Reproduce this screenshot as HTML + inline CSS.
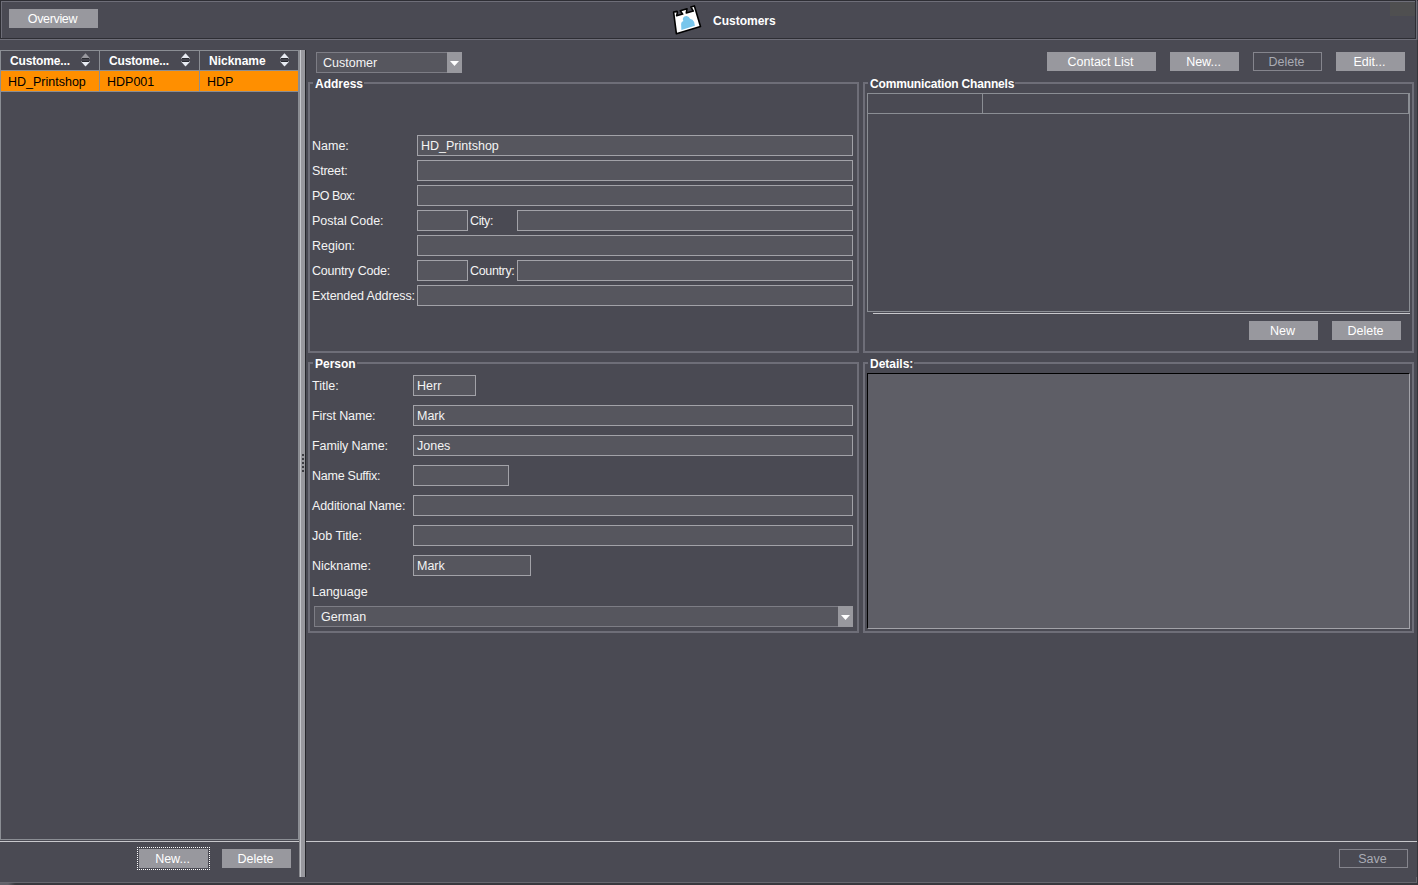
<!DOCTYPE html>
<html><head><meta charset="utf-8">
<style>
html,body{margin:0;padding:0;}
body{width:1418px;height:885px;overflow:hidden;background:#4a4a53;position:relative;font-family:"Liberation Sans",sans-serif;font-size:12.5px;line-height:15px;color:#f4f4f4;}
.a{position:absolute;box-sizing:border-box;}
.t{position:absolute;white-space:nowrap;line-height:15px;}
.b{font-weight:bold;font-size:12px;color:#fff;}
.btn{position:absolute;box-sizing:border-box;background:#98989e;color:#fff;text-align:center;line-height:15px;padding-top:3px;padding-right:2px;height:19px;width:69px;}
.dis{background:transparent;border:1px solid #85858d;color:#a9abb3;padding-top:2px;}
.fld{position:absolute;box-sizing:border-box;border:1px solid #a2a2a8;background:#56565e;height:21px;}
.grp{position:absolute;box-sizing:border-box;border:2px solid #6e6e78;}
.gl{position:absolute;background:#4a4a53;padding:0 1px 0 2px;line-height:15px;font-weight:bold;font-size:12px;color:#fff;white-space:nowrap;}
.hl{position:absolute;height:1px;}
.vl{position:absolute;width:1px;}
</style></head><body>

<!-- ===== top bar ===== -->
<div class="hl" style="left:0;top:0;width:1418px;background:#2e2e34"></div>
<div class="vl" style="left:0;top:0;height:40px;background:#2e2e34"></div>
<div class="hl" style="left:1px;top:1px;width:1414px;background:#6e6e78"></div>
<div class="vl" style="left:1px;top:1px;height:37px;background:#6e6e78"></div>
<div class="hl" style="left:1px;top:38px;width:1415px;background:#2e2e34"></div>
<div class="vl" style="left:1415px;top:1px;height:38px;background:#2e2e34"></div>
<div class="hl" style="left:0;top:39px;width:1417px;background:#6e6e78"></div>
<div class="vl" style="left:1416px;top:0;height:40px;background:#6e6e78"></div>
<div class="a" style="left:1390px;top:2px;width:25px;height:14px;background:#4f4f50"></div>

<div class="btn" style="left:9px;top:9px;width:89px;letter-spacing:-0.35px">Overview</div>

<!-- icon -->
<svg class="a" style="left:666px;top:0px" width="40" height="40" viewBox="666 0 40 40">
  <path d="M673.6 12.1 L677.1 11.4 Q677.6 12.2 677.2 13.4 L676.6 15.8 L682.7 14.1 L680.3 10.7 L687 8.7 L686.3 12.9 L693.3 11.1 L690.9 6.9 L694.4 5.9 L700.5 26.5 L676.4 33.8 Z" fill="#fff" stroke="#000" stroke-width="1.6" stroke-linejoin="round"/>
  <path d="M681.4 29.9 L681.1 24 Q681.2 21.6 683.4 21 Q682.4 19.4 683 17.9 Q684.2 15.9 686.7 16.1 Q689.3 16.5 690 18.8 Q692.9 19.2 694.1 22 L694.9 25.8 Z" fill="#78c6ec"/>
</svg>
<div class="t b" style="left:713px;top:14px">Customers</div>

<!-- ===== left table ===== -->
<div class="a" style="left:0;top:50px;width:299px;height:790px;border:1px solid #8b8e94;"></div>
<div class="hl" style="left:1px;top:70px;width:297px;background:#8b8e94"></div>
<div class="a" style="left:1px;top:71px;width:297px;height:20px;background:#ff8f00"></div>
<div class="hl" style="left:1px;top:91px;width:297px;background:#8b8e94"></div>
<div class="vl" style="left:99px;top:51px;height:40px;background:#8b8e94"></div>
<div class="vl" style="left:199px;top:51px;height:40px;background:#8b8e94"></div>

<div class="t b" style="left:10px;top:54px;letter-spacing:-0.15px">Custome...</div>
<div class="t b" style="left:109px;top:54px;letter-spacing:-0.15px">Custome...</div>
<div class="t b" style="left:209px;top:54px">Nickname</div>

<svg class="a" style="left:81px;top:53px" width="10" height="14" viewBox="0 0 10 14"><path d="M-0.2 5.6 L4.5 0.2 L9.2 5.6 Z" fill="#98989e"/><path d="M-0.2 8.4 L9.2 8.4 L4.5 13.6 Z" fill="#e8ebf2"/><rect x="1" y="5" width="7" height="1.1" fill="#2a2b31"/><rect x="1" y="7.9" width="7" height="1.1" fill="#2a2b31"/></svg>
<svg class="a" style="left:181px;top:53px" width="10" height="14" viewBox="0 0 10 14"><path d="M-0.2 5.6 L4.5 0.2 L9.2 5.6 Z" fill="#e8ebf2"/><path d="M-0.2 8.4 L9.2 8.4 L4.5 13.6 Z" fill="#e8ebf2"/><rect x="1" y="5" width="7" height="1.1" fill="#2a2b31"/><rect x="1" y="7.9" width="7" height="1.1" fill="#2a2b31"/></svg>
<svg class="a" style="left:280px;top:53px" width="10" height="14" viewBox="0 0 10 14"><path d="M-0.2 5.6 L4.5 0.2 L9.2 5.6 Z" fill="#e8ebf2"/><path d="M-0.2 8.4 L9.2 8.4 L4.5 13.6 Z" fill="#e8ebf2"/><rect x="1" y="5" width="7" height="1.1" fill="#2a2b31"/><rect x="1" y="7.9" width="7" height="1.1" fill="#2a2b31"/></svg>

<div class="t" style="left:8px;top:75px;color:#000">HD_Printshop</div>
<div class="t" style="left:107px;top:75px;color:#000">HDP001</div>
<div class="t" style="left:207px;top:75px;color:#000">HDP</div>

<!-- splitter -->
<div class="vl" style="left:299px;top:50px;height:827px;background:#8a8b90"></div>
<div class="vl" style="left:300px;top:50px;height:827px;background:#c6c7cc"></div>
<div class="a" style="left:301px;top:50px;width:4px;height:827px;background:#98989e"></div>
<div class="vl" style="left:305px;top:50px;height:827px;background:#25262b"></div>


<!-- grip -->
<div class="a" style="left:302px;top:454px;width:2px;height:2px;background:#3c3c42"></div><div class="a" style="left:302px;top:458px;width:2px;height:2px;background:#3c3c42"></div><div class="a" style="left:302px;top:462px;width:2px;height:2px;background:#3c3c42"></div><div class="a" style="left:302px;top:466px;width:2px;height:2px;background:#3c3c42"></div><div class="a" style="left:302px;top:470px;width:2px;height:2px;background:#3c3c42"></div>
<!-- bottom of left -->
<div class="hl" style="left:0;top:841px;width:299px;background:#c8c8cc"></div>
<div class="hl" style="left:306px;top:841px;width:1111px;background:#c8c8cc"></div>
<div class="a" style="left:137px;top:847px;width:73px;height:23px;border:1px dotted #fff;"></div>
<div class="btn" style="left:139px;top:849px;">New...</div>
<div class="btn" style="left:222px;top:849px;">Delete</div>

<div class="btn dis" style="left:1339px;top:849px;">Save</div>

<div class="hl" style="left:0;top:882px;width:1417px;background:#67676f"></div>
<div class="a" style="left:0;top:883px;width:1418px;height:2px;background:#38383e"></div>
<div class="vl" style="left:1417px;top:40px;height:845px;background:#35353a"></div>
<div class="vl" style="left:1416px;top:877px;height:6px;background:#67676f"></div>
<div class="a" style="left:0;top:883px;width:16px;height:2px;background:linear-gradient(to right,#606068 0,#606068 8px,#3a3a3f 15px)"></div>

<!-- ===== right top controls ===== -->
<div class="a" style="left:316px;top:52px;width:146px;height:21px;border:1px solid #7d7d85;background:#56565e"></div>
<div class="a" style="left:447px;top:52px;width:15px;height:21px;background:#98989e"></div>
<svg class="a" style="left:450px;top:61px" width="9" height="6" viewBox="0 0 9 6"><path d="M0 0 H9 L4.5 5 Z" fill="#fff"/></svg>
<div class="t" style="left:323px;top:56px">Customer</div>

<div class="btn" style="left:1047px;top:52px;width:109px;">Contact List</div>
<div class="btn" style="left:1170px;top:52px;">New...</div>
<div class="btn dis" style="left:1253px;top:52px;">Delete</div>
<div class="btn" style="left:1336px;top:52px;">Edit...</div>

<!-- ===== Address group ===== -->
<div class="grp" style="left:308px;top:82px;width:551px;height:271px"></div>
<div class="gl" style="left:313px;top:77px">Address</div>

<div class="t" style="left:312px;top:139px">Name:</div>
<div class="fld" style="left:417px;top:135px;width:436px"></div>
<div class="t" style="left:421px;top:139px">HD_Printshop</div>

<div class="t" style="left:312px;top:164px;letter-spacing:-0.2px">Street:</div>
<div class="fld" style="left:417px;top:160px;width:436px"></div>

<div class="t" style="left:312px;top:189px;letter-spacing:-0.55px">PO Box:</div>
<div class="fld" style="left:417px;top:185px;width:436px"></div>

<div class="t" style="left:312px;top:214px">Postal Code:</div>
<div class="fld" style="left:417px;top:210px;width:51px"></div>
<div class="t" style="left:470px;top:214px;letter-spacing:-0.4px">City:</div>
<div class="fld" style="left:517px;top:210px;width:336px"></div>

<div class="t" style="left:312px;top:239px">Region:</div>
<div class="fld" style="left:417px;top:235px;width:436px"></div>

<div class="t" style="left:312px;top:264px;letter-spacing:-0.2px">Country Code:</div>
<div class="fld" style="left:417px;top:260px;width:51px"></div>
<div class="t" style="left:470px;top:264px;letter-spacing:-0.35px">Country:</div>
<div class="fld" style="left:517px;top:260px;width:336px"></div>

<div class="t" style="left:312px;top:289px;letter-spacing:-0.12px">Extended Address:</div>
<div class="fld" style="left:417px;top:285px;width:436px"></div>

<!-- ===== Communication Channels ===== -->
<div class="grp" style="left:863px;top:82px;width:551px;height:271px"></div>
<div class="gl" style="left:868px;top:77px;letter-spacing:-0.17px">Communication Channels</div>
<div class="a" style="left:867px;top:93px;width:543px;height:219px;border:1px solid #8b8e94"></div>
<div class="hl" style="left:868px;top:113px;width:541px;background:#8b8e94"></div>
<div class="vl" style="left:982px;top:94px;height:19px;background:#8b8e94"></div>
<div class="vl" style="left:1408px;top:94px;height:19px;background:#8b8e94"></div>
<div class="hl" style="left:873px;top:313px;width:537px;background:#c8c8cc"></div>
<div class="btn" style="left:1249px;top:321px;">New</div>
<div class="btn" style="left:1332px;top:321px;">Delete</div>

<!-- ===== Person group ===== -->
<div class="grp" style="left:308px;top:362px;width:551px;height:271px"></div>
<div class="gl" style="left:313px;top:357px">Person</div>

<div class="t" style="left:312px;top:379px">Title:</div>
<div class="fld" style="left:413px;top:375px;width:63px"></div>
<div class="t" style="left:417px;top:379px">Herr</div>

<div class="t" style="left:312px;top:409px;letter-spacing:-0.1px">First Name:</div>
<div class="fld" style="left:413px;top:405px;width:440px"></div>
<div class="t" style="left:417px;top:409px">Mark</div>

<div class="t" style="left:312px;top:439px;letter-spacing:-0.1px">Family Name:</div>
<div class="fld" style="left:413px;top:435px;width:440px"></div>
<div class="t" style="left:417px;top:439px">Jones</div>

<div class="t" style="left:312px;top:469px;letter-spacing:-0.25px">Name Suffix:</div>
<div class="fld" style="left:413px;top:465px;width:96px"></div>

<div class="t" style="left:312px;top:499px;letter-spacing:-0.12px">Additional Name:</div>
<div class="fld" style="left:413px;top:495px;width:440px"></div>

<div class="t" style="left:312px;top:529px">Job Title:</div>
<div class="fld" style="left:413px;top:525px;width:440px"></div>

<div class="t" style="left:312px;top:559px">Nickname:</div>
<div class="fld" style="left:413px;top:555px;width:118px"></div>
<div class="t" style="left:417px;top:559px">Mark</div>

<div class="t" style="left:312px;top:585px">Language</div>
<div class="a" style="left:314px;top:606px;width:539px;height:21px;border:1px solid #7d7d85;background:#56565e"></div>
<div class="a" style="left:838px;top:606px;width:15px;height:21px;background:#98989e"></div>
<svg class="a" style="left:841px;top:615px" width="9" height="6" viewBox="0 0 9 6"><path d="M0 0 H9 L4.5 5 Z" fill="#fff"/></svg>
<div class="t" style="left:321px;top:610px">German</div>

<!-- ===== Details group ===== -->
<div class="grp" style="left:863px;top:362px;width:551px;height:271px"></div>
<div class="gl" style="left:868px;top:357px">Details:</div>
<div class="a" style="left:867px;top:373px;width:543px;height:256px;background:#5e5e66;border-top:1px solid #000;border-left:1px solid #000;border-right:1px solid #a2a2a8;border-bottom:1px solid #a2a2a8"></div>

</body></html>
